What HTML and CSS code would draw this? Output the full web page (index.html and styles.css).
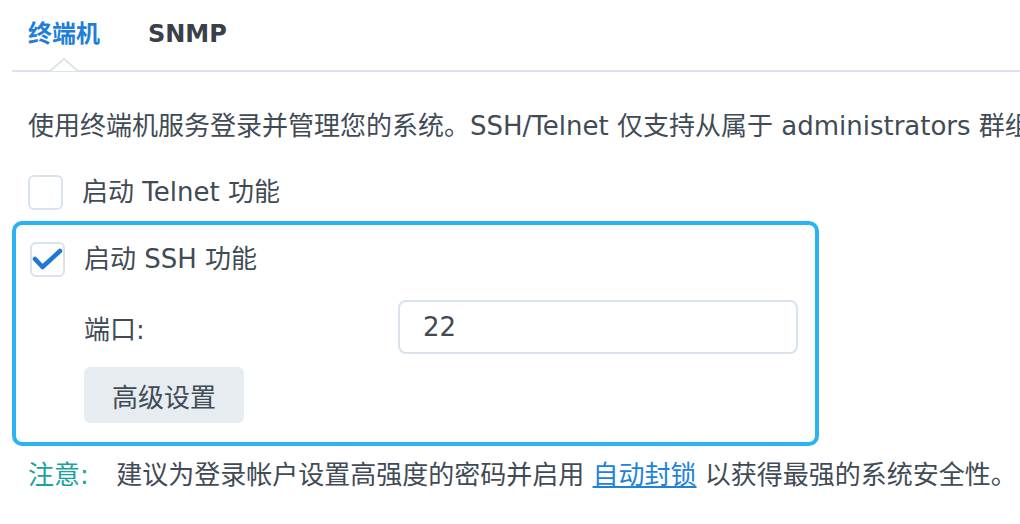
FILE: index.html
```html
<!DOCTYPE html>
<html lang="zh-CN">
<head>
    <meta charset="UTF-8">
    <title>终端机</title>
    <link rel="stylesheet" href="styles.css">
</head>
<body>
    <div class="tabs">
        <div class="tab active">终端机
            <svg class="caret" width="28" height="14" viewBox="0 0 28 14">
                <polyline points="0,13 14,1 28,13" fill="#fff" stroke="#dbe3ec" stroke-width="2"/>
            </svg>
        </div>
        <div class="tab">SNMP</div>
    </div>

    <div class="content">
        <p class="desc">使用终端机服务登录并管理您的系统。SSH/Telnet 仅支持从属于 administrators 群组的帐户登录。</p>

        <label class="check-row">
            <span class="checkbox"></span>
            <span>启动 Telnet 功能</span>
        </label>

        <div class="ssh-box">
            <label class="check-row">
                <span class="checkbox checked">
                    <svg width="35" height="35" viewBox="0 0 35 35">
                        <polyline points="5,17 12.5,25 30,9" fill="none" stroke="#1f78d6" stroke-width="4.5" stroke-linecap="round" stroke-linejoin="round"/>
                    </svg>
                </span>
                <span>启动 SSH 功能</span>
            </label>

            <div class="field-row">
                <span class="field-label">端口:</span>
                <input class="field-input" type="text" value="22">
            </div>

            <button class="btn">高级设置</button>
        </div>

        <p class="note">
            <span class="note-label">注意:</span>
            建议为登录帐户设置高强度的密码并启用 <a href="#">自动封锁</a> 以获得最强的系统安全性。
        </p>
    </div>
</body>
</html>
```

FILE: styles.css
```css
body {
    margin: 0;
    font-family: "DejaVu Sans", "Noto Sans CJK SC", sans-serif;
    font-size: 26px;
    color: #414b55;
    background-color: #fff;
    overflow: hidden;
    width: 1020px;
    height: 524px;
}

.tabs {
    display: flex;
    gap: 48px;
    margin-left: 12px;
    padding: 17px 0 19px 16px;
    border-bottom: 2px solid #dbe3ec;
}

.tab {
    position: relative;
    font-size: 24px;
    font-weight: bold;
    line-height: 34px;
    color: #3a4049;
}

.tab.active {
    color: #1f7fd8;
}

.caret {
    position: absolute;
    left: 50%;
    bottom: -21px;
    margin-left: -14px;
}

.content {
    padding-left: 28px;
}

.desc {
    margin: 36px 0 30px;
    line-height: 36px;
    white-space: nowrap;
    overflow: hidden;
}

.check-row {
    display: flex;
    align-items: center;
    gap: 19px;
    height: 36px;
    line-height: 36px;
}

.checkbox {
    width: 35px;
    height: 35px;
    box-sizing: border-box;
    border: 2px solid #dae2eb;
    border-radius: 6px;
    display: flex;
    align-items: center;
    justify-content: center;
    flex-shrink: 0;
}

.checkbox svg {
    margin: -2px;
}

.ssh-box {
    width: 807px;
    box-sizing: border-box;
    margin: 11px 0 0 -16px;
    padding: 16px 14px 19px;
    border: 4px solid #2ab3f3;
    border-radius: 10px;
    display: flex;
    flex-direction: column;
}

.field-row {
    display: flex;
    align-items: center;
    margin: 23px 0 13px 54px;
}

.field-label {
    width: 314px;
}

.field-input {
    width: 400px;
    height: 54px;
    box-sizing: border-box;
    padding: 0 23px;
    border: 2px solid #dae2eb;
    border-radius: 8px;
    font-family: inherit;
    font-size: 26px;
    color: #414b55;
    outline: none;
}

.btn {
    align-self: flex-start;
    margin-left: 54px;
    width: 160px;
    height: 56px;
    border: none;
    border-radius: 6px;
    background-color: #e7ecf1;
    font-family: inherit;
    font-size: 26px;
    color: #414b55;
    cursor: pointer;
}

.note {
    margin: 11px 0 0;
    line-height: 36px;
    white-space: nowrap;
}

.note-label {
    display: inline-block;
    width: 80px;
    color: #1aa39b;
}

.note a {
    color: #1e82dd;
}
```
